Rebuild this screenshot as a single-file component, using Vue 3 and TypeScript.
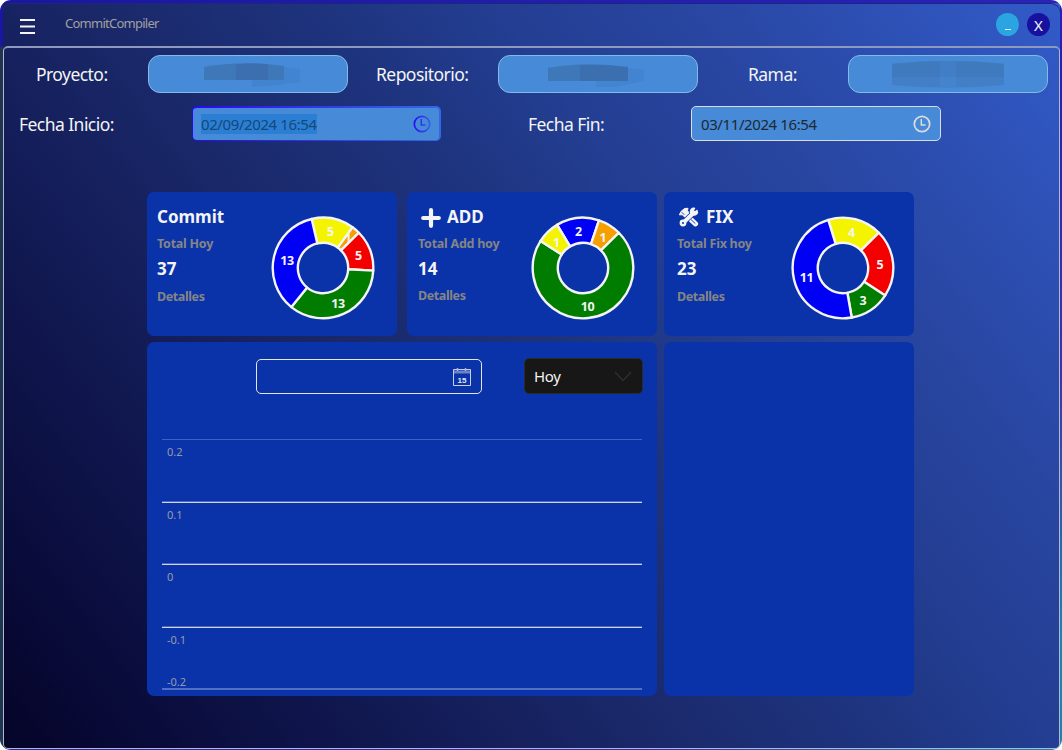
<script setup lang="ts">
interface Slice { value: number; color: string; start: number; end: number; lx: number; ly: number }
interface Card { id: string; title: string; sub: string; total: number; slices: Slice[] }

const cards: Card[] = [
  {
    id: 'commit', title: 'Commit', sub: 'Total Hoy', total: 37,
    slices: [
      { value: 5, color: '#f4f400', start: -13, end: 36, lx: 59.5, ly: 19.5 },
      { value: 1, color: '#f5a000', start: 36, end: 45.5, lx: 77, ly: 27 },
      { value: 5, color: '#f40000', start: 45.5, end: 93, lx: 87.5, ly: 43.5 },
      { value: 13, color: '#007c00', start: 93, end: 219, lx: 67, ly: 91.5 },
      { value: 13, color: '#0000f4', start: 219, end: 347, lx: 16, ly: 48.5 },
    ],
  },
  {
    id: 'add', title: 'ADD', sub: 'Total Add hoy', total: 14,
    slices: [
      { value: 2, color: '#0000f4', start: -31, end: 18.5, lx: 47.5, ly: 19.5 },
      { value: 1, color: '#f5a000', start: 18.5, end: 45.5, lx: 72, ly: 25.5 },
      { value: 10, color: '#007c00', start: 45.5, end: 302.5, lx: 56.5, ly: 94.5 },
      { value: 1, color: '#f4f400', start: 302.5, end: 329, lx: 25.5, ly: 30.5 },
    ],
  },
  {
    id: 'fix', title: 'FIX', sub: 'Total Fix hoy', total: 23,
    slices: [
      { value: 4, color: '#f4f400', start: -17, end: 45.5, lx: 60.5, ly: 20.5 },
      { value: 5, color: '#f40000', start: 45.5, end: 123, lx: 89, ly: 52.5 },
      { value: 3, color: '#007c00', start: 123, end: 170, lx: 72, ly: 88.5 },
      { value: 11, color: '#0000f4', start: 170, end: 343, lx: 15.5, ly: 65.5 },
    ],
  },
]

const C = 52
function pt(r: number, deg: number): string {
  const a = (deg * Math.PI) / 180
  return `${(C + r * Math.sin(a)).toFixed(2)} ${(C - r * Math.cos(a)).toFixed(2)}`
}
function arc(s: Slice): string {
  const large = s.end - s.start > 180 ? 1 : 0
  return `M${pt(50.3, s.start)}A50.3 50.3 0 ${large} 1 ${pt(50.3, s.end)}L${pt(25.2, s.end)}A25.2 25.2 0 ${large} 0 ${pt(25.2, s.start)}Z`
}
</script>

<template>
  <div class="window">
    <header class="titlebar">
      <svg class="burger" width="16" height="15" viewBox="0 0 16 15"><path d="M0 1h15M0 7.500h15M0 14h15" stroke="#f4f4f4" stroke-width="1.900" /></svg>
      <span class="app-name">CommitCompiler</span>
      <button class="round min"><i></i></button>
      <button class="round close"><span>X</span></button>
    </header>

    <main class="content">
      <section class="row repo-row">
        <label class="proyecto"><span>Proyecto:</span></label>
        <div class="pill">
          <svg width="198" height="36" viewBox="0 0 198 36">
            <path d="M55 11Q94 4 135 10V24H55Z" fill="#3f78b9" />
            <path d="M87 8.500Q103 7 119 8V24H87Z" fill="#3b6fb0" />
            <path d="M135 11L151 13V26L121 30L103 31V24H135Z" fill="#4384d0" />
          </svg>
        </div>
        <label class="repositorio"><span>Repositorio:</span></label>
        <div class="pill">
          <svg width="198" height="36" viewBox="0 0 198 36">
            <path d="M49 12Q88 5 129 11V25H49Z" fill="#3f78b9" />
            <path d="M81 9.500Q97 8 129 11V25H81Z" fill="#3b6fb0" />
            <path d="M129 12L145 14V25L115 31H97V25H129Z" fill="#4384d0" />
          </svg>
        </div>
        <label class="rama"><span>Rama:</span></label>
        <div class="pill">
          <svg width="198" height="36" viewBox="0 0 198 36">
            <path d="M43 8Q99 2 155 8V29Q99 34 43 29Z" fill="#427fc6" />
            <path d="M43 8Q75 5 91 5V21H43ZM107 5Q131 5 155 8V21H107Z" fill="#3f7abf" />
            <path d="M91 5H107V21H91Z" fill="#417ec5" />
            <path d="M91 21H107V31H91Z" fill="#4484cc" />
          </svg>
        </div>
      </section>

      <section class="row date-row">
        <label class="inicio"><span>Fecha Inicio:</span></label>
        <div class="date focused">
          <span class="value selected">02/09/2024 16:54</span>
          <svg class="clock" width="18" height="18" viewBox="0 0 18 18" fill="none" stroke="url(#focus)" stroke-width="1.7">
            <defs><linearGradient id="focus" gradientUnits="userSpaceOnUse" x1="0" y1="0" x2="18" y2="0"><stop offset="0" stop-color="#2a08ee" /><stop offset="1" stop-color="#3568e4" /></linearGradient></defs>
            <circle cx="9" cy="9" r="7.700" /><path d="M8.300 4V10H12.500" stroke-width="1.500" />
          </svg>
        </div>
        <label class="fin"><span>Fecha Fin:</span></label>
        <div class="date">
          <span class="value">03/11/2024 16:54</span>
          <svg class="clock" width="18" height="18" viewBox="0 0 18 18" fill="none" stroke="#dcdcdc" stroke-width="1.700">
            <circle cx="9" cy="9" r="7.700" /><path d="M8.300 4V10H12.500" stroke-width="1.500" />
          </svg>
        </div>
      </section>

      <section class="dashboard">
        <article v-for="card in cards" :key="card.id" class="card" :class="card.id">
          <div class="info">
            <h2>
              <svg v-if="card.id === 'add'" class="plus" width="20" height="20" viewBox="0 0 20 20"><path d="M10 2.200V17.800M2.200 10H17.800" stroke="#f4f4f4" stroke-width="4.200" stroke-linecap="round" /></svg>
              <svg v-if="card.id === 'fix'" class="tools" width="22" height="20" viewBox="0 0 22 20" fill="none" stroke-linecap="round" stroke-linejoin="round">
                <path d="M8 8L17.500 16.800" stroke="#f4f4f4" stroke-width="5.200" />
                <path d="M1.500 7.500L3 4.500L6.500 1.500L10 1.300L9.500 3.500L11 6L7 10L4.500 8Z" fill="#f4f4f4" stroke="#f4f4f4" />
                <path d="M7 14L14.500 7" stroke="#0a33aa" stroke-width="5.600" stroke-linecap="butt" />
                <path d="M5 16L16 5.500" stroke="#f4f4f4" stroke-width="4" />
                <path d="M19 3.500L16.500 5.500L14.800 4L16.500 1.300C13.500 1 12 3 12.600 6L14.500 8C18 8.500 20.500 6.500 19 3.500Z" fill="#f4f4f4" stroke="#f4f4f4" stroke-width="1.400" />
                <circle cx="5" cy="16" r="3.400" fill="#f4f4f4" /><circle cx="5" cy="16" r="1" fill="#0a33aa" />
                <path d="M13.500 13L17 16.300" stroke="#0a33aa" stroke-width=".9" />
                <path d="M4 5.500L6 7.500" stroke="#0a33aa" stroke-width=".9" />
              </svg>
              <span>{{ card.title }}</span>
            </h2>
            <p class="sub"><span>{{ card.sub }}</span></p>
            <p class="total"><span>{{ card.total }}</span></p>
            <p class="details"><span>Detalles</span></p>
          </div>
          <svg class="donut" width="104" height="104" viewBox="0 0 104 104">
            <path v-for="s in card.slices" :key="s.start" :d="arc(s)" :fill="s.color" stroke="#f4f4f4" stroke-width="2.400" stroke-linejoin="round" />
            <text v-for="s in card.slices" :key="'t' + s.start" :x="s.lx" :y="s.ly">{{ s.value }}</text>
          </svg>
        </article>

        <article class="panel chart">
          <div class="filters">
            <div class="day">
              <svg width="20" height="20" viewBox="0 0 20 20" fill="none" stroke="#c9cfe4">
                <path d="M1.500 2.500H18.500V18.500H1.500Z" /><path d="M2 5H18" stroke="#6d82c7" stroke-width="3" /><path d="M5.500 1V4M13.500 1V4" stroke="#a9b5dd" stroke-width="1.500" />
                <text x="10" y="15.500">15</text>
              </svg>
            </div>
            <div class="select">
              <span>Hoy</span>
              <svg width="18" height="11" viewBox="0 0 18 11"><path d="M1 1L9 9.500L17 1" fill="none" stroke="#303030" stroke-width="1.200" /></svg>
            </div>
          </div>
          <div class="plot">
            <div class="tick first"><span>0.2</span></div>
            <div class="tick"><span>0.1</span></div>
            <div class="tick"><span>0</span></div>
            <div class="tick last"><span>-0.1</span><span>-0.2</span></div>
          </div>
        </article>
        <article class="panel side"></article>
      </section>
    </main>
  </div>
</template>

<style>
body { margin: 0; background: #fff; overflow: hidden; }
</style>

<style scoped>
* { box-sizing: border-box; }
.window {
  width: 1062px; height: 750px; padding: 3px 2px 1px 3px; border-radius: 11px;
  display: flex; flex-direction: column;
  font-family: "Noto Sans", "Open Sans", sans-serif; color: #f4f4f4;
  background:
    linear-gradient(53deg, #050428 0%, #090b3a 10%, #131c57 27.7%, #1a2869 40%, #1e347f 54.7%, #233e92 65%, #2845a0 76%, #325bc9 100%) 3px 3px / 1057px 745px no-repeat,
    linear-gradient(to right, #2823a8 0, #3a26a8 60%, #1c80b4 92%) bottom / 100% 2px no-repeat,
    linear-gradient(to bottom, #2520b8 0 47px, #3b35a8 50%, #1d84b0 85%) right / 3px 100% no-repeat,
    linear-gradient(to right, transparent, #2a22bc) top / 100% 3px no-repeat,
    linear-gradient(to bottom, #1a16a3 0 46px, #20354f 47px);
}
.titlebar { height: 43px; flex: none; display: flex; align-items: center; padding: 0 10px 0 17px; box-shadow: inset 0 1px 0 #1b2a70; border-radius: 9px 9px 0 0; }
.burger { margin-top: 3px; }
.app-name { margin: -3px auto 0 29px; font-size: 13px; color: #a0a0a0; letter-spacing: -.75px; }
.round { width: 23px; height: 23px; border-radius: 50%; border: 0; padding: 0; display: flex; justify-content: center; align-items: center; margin-right: 8px; font: 15px "Noto Sans", sans-serif; color: #f4f4f4; }
.min { background: #2aa5e2; }
.min i { width: 6px; height: 1px; background: #f4f4f4; margin-top: 10px; }
.close { background: #1711a0; margin-right: 0; }
.content { flex: 1; border: 1px solid #b4b7cc; border-top: 2px solid #8f98bd; border-radius: 5px; display: flex; flex-direction: column; }
.row { display: flex; align-items: center; }
label { font-size: 17.5px; line-height: 24px; letter-spacing: -.55px; white-space: nowrap; }
.date-row label { padding-top: 1px; }
.repo-row { height: 38px; margin-top: 7px; }
.pill { width: 200px; height: 38px; border: 1px solid #83bbe5; border-radius: 12px; background: #468ad8; overflow: hidden; }
.pill svg { display: block; }
.proyecto { width: 112px; margin-left: 32px; }
.repositorio { width: 122px; margin-left: 28px; }
.rama { width: 100px; margin-left: 50px; }
.date-row { height: 35px; margin-top: 13px; }
.inicio { width: 173px; margin-left: 15px; }
.fin { width: 163px; margin-left: 87px; }
.date { width: 250px; height: 35px; display: flex; align-items: center; justify-content: space-between; padding: 0 9px 0 9px; border: 1px solid #d8dce4; border-radius: 5px; background: #468ad8; font-size: 15px; color: #202830; }
.focused { width: 249px; padding: 0 8px 0 8px; border: 2px solid transparent; border-bottom-width: 1px; border-left-width: 1px; background: linear-gradient(#468ad8, #468ad8) padding-box, linear-gradient(to right, #2a08ee, #3568e4) border-box; }
.value { letter-spacing: -.4px; line-height: 20px; }
.selected { background: #2a7fd5; color: #164878; }
.dashboard { margin: 51px 0 0 143px; display: grid; grid-template-columns: 260px 257px 250px; grid-template-rows: 144px 354px; row-gap: 6px; }
.card, .panel { background: #0a33aa; border-radius: 7px; }
.card { width: 250px; display: flex; justify-content: space-between; padding-right: 22px; }
.fix { padding-right: 19px; }
.donut { margin-top: 24px; overflow: visible; }
.donut text { font-size: 12.5px; font-weight: 700; text-anchor: middle; fill: #f4f4f4; letter-spacing: -.3px; }
.info { padding: 13px 0 0 10px; white-space: nowrap; }
.add .info { padding-left: 11px; }
.fix .info { padding-left: 13px; }
h2 { margin: 0; font-size: 17px; line-height: 24px; display: flex; align-items: center; }
.plus { margin: 1px 6px 0 3px; }
.tools { margin: 0 6px 0 1px; }
p { margin: 0; font-weight: 700; }
.sub, .details { font-size: 12.500px; line-height: 18px; color: #858585; letter-spacing: -.25px; }
.details { letter-spacing: -.4px; }
.sub { margin-top: 6px; }
.total { font-size: 17px; line-height: 24px; margin-top: 4px; }
.details { margin-top: 7px; }
.add .details { margin-top: 6px; }
.chart { grid-column: 1 / 3; width: 510px; padding: 16px 15px 0; }
.filters { display: flex; height: 36px; padding-left: 94px; }
.day { flex: none; width: 226px; height: 35px; margin-top: 1px; border: 1px solid #e4e6ee; border-radius: 5px; display: flex; align-items: center; justify-content: flex-end; padding-right: 9px; }
.day text { font: bold 8px "Liberation Sans", sans-serif; fill: #e4e6ee; stroke: none; text-anchor: middle; }
.select { flex: none; width: 119px; height: 36px; margin-left: 42px; background: #171717; border: 1px solid #2b2b2b; border-radius: 5px; display: flex; align-items: center; justify-content: space-between; padding: 0 10px 0 9px; font-size: 15px; letter-spacing: -.3px; }
.plot { margin-top: 45px; height: 251px; display: grid; grid-template-rows: 62px 62px 63px 64px; border-bottom: 2px solid #5170c4; }
.tick { padding: 6px 0 0 5px; font-size: 11px; line-height: 15px; color: #989ba5; background: linear-gradient(#4a68bf 0 1px, #d0d4e6 1px 2px, transparent 2px); }
.first { padding-top: 5px; background: linear-gradient(#4262bf 0 1px, transparent 1px); }
.last { display: flex; flex-direction: column; justify-content: space-between; padding-bottom: 1px; }
</style>
